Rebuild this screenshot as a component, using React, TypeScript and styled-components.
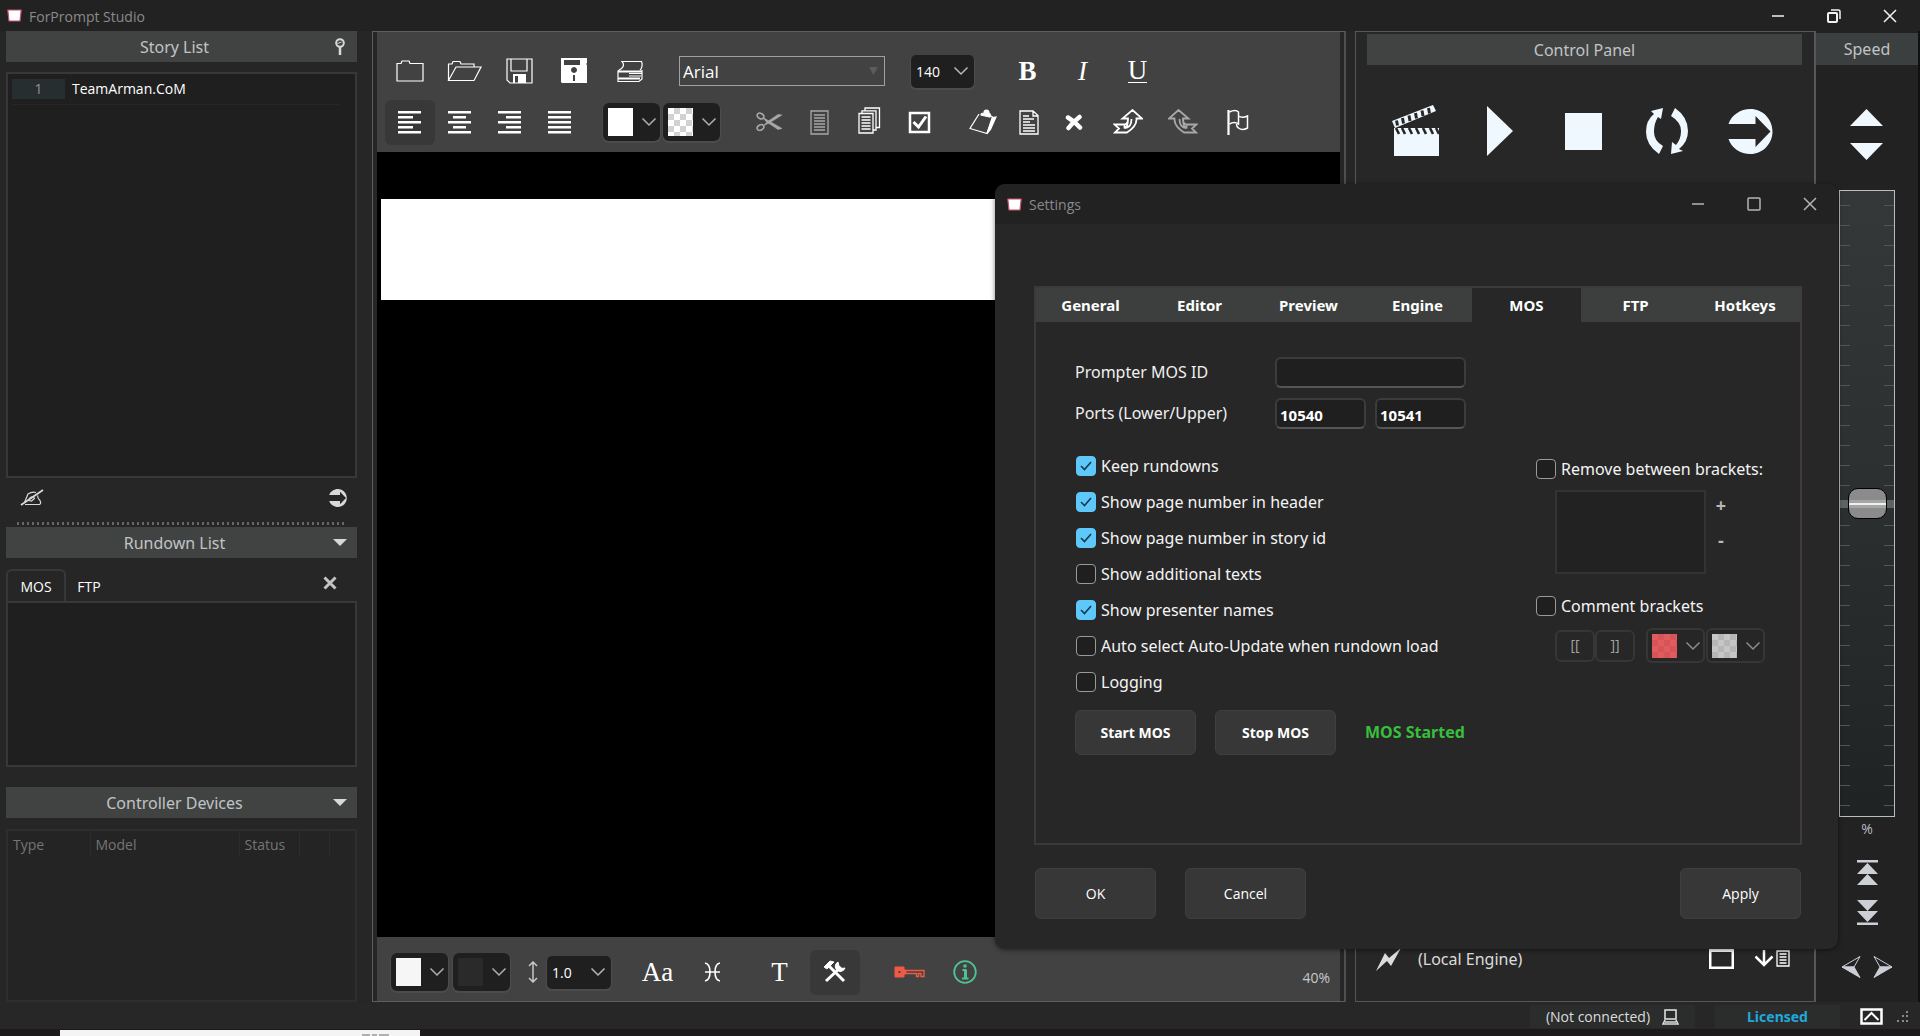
import React, { useState } from "react";
import styled, { createGlobalStyle, css } from "styled-components";

const sans = `"Open Sans", "Noto Sans", sans-serif`;
const wide = `"Noto Sans", "Open Sans", sans-serif`;
const serif = `"Liberation Serif", serif`;

const Global = createGlobalStyle`
  *, *::before, *::after { box-sizing: border-box; }
  body { margin: 0; background: #262626; font-family: ${sans}; font-size: 14px; color: #fff; overflow: hidden; }
  button, input, select { font-family: inherit; font-size: inherit; color: inherit; margin: 0; }
  button { padding: 0; border: 0; background: none; }
  svg { display: block; flex: none; }
`;

/* ---------- shell ---------- */

const Shell = styled.div`
  height: 100vh;
  display: flex;
  flex-direction: column;
  background: #262626;
`;

const TitleBar = styled.header<{ $dialog?: boolean }>`
  flex: none;
  height: ${(p) => (p.$dialog ? 40 : 31)}px;
  padding-left: ${(p) => (p.$dialog ? 12 : 7)}px;
  display: flex;
  align-items: center;
  gap: 7px;
  background: #222;
  color: #8a8a8a;
`;

const AppMark = styled.span`
  width: 15px;
  height: 13px;
`;

const TitleText = styled.h1`
  flex: 1;
  margin: 0;
  padding-top: 2px;
  font-size: 14px;
  line-height: 20px;
  font-weight: 400;
`;

const WindowButton = styled.button`
  width: 56px;
  height: 100%;
  display: grid;
  place-items: center;
`;

const WindowButtons = styled.div<{ $dim?: boolean }>`
  height: 100%;
  display: flex;
  padding-right: ${(p) => (p.$dim ? 0 : 2)}px;
  color: ${(p) => (p.$dim ? "#b5b5b5" : "#f2f2f2")};
`;

const Main = styled.main`
  flex: 1;
  min-height: 0;
  display: grid;
  grid-template-columns: 372px minmax(0, 1fr) 470px 104px;
`;

/* ---------- left column ---------- */

const Side = styled.aside`
  display: flex;
  flex-direction: column;
  padding: 0 15px 0 6px;
  min-height: 0;
`;

const PanelHeader = styled.div`
  flex: none;
  height: 31px;
  display: grid;
  grid-template-columns: 20px 1fr 34px;
  align-items: center;
  background: #414343;
  color: #c0c3c6;
`;

const PanelTitle = styled.h2`
  grid-column: 2;
  margin: 0;
  text-align: center;
  font-family: ${wide};
  font-size: 16px;
  line-height: 24px;
  font-weight: 400;
`;

const HeaderButton = styled.button`
  height: 31px;
  display: grid;
  place-items: center;
  color: #d6d8da;
`;

const StoryBox = styled.ol`
  flex: 1;
  min-height: 0;
  margin: 10px 0 0;
  padding: 4px;
  list-style: none;
  border: 2px solid #383838;
  background: #1f1f1f;
`;

const StoryRow = styled.li`
  display: flex;
  align-items: center;
  gap: 7px;
  width: 328px;
  padding-bottom: 4px;
  border-bottom: 1px solid #262626;
  font-size: 14px;
  line-height: 22px;
`;

const StoryIndex = styled.span`
  width: 53px;
  line-height: 20px;
  text-align: center;
  background: #262e30;
  color: #8f9497;
`;

const SideTools = styled.div`
  flex: none;
  height: 44px;
  padding: 0 10px 5px 14px;
  display: flex;
  align-items: center;
  justify-content: space-between;
`;

const Grip = styled.div`
  flex: none;
  height: 3px;
  margin: 0 12px 2px 11px;
  background: repeating-linear-gradient(90deg, #666 0 2px, transparent 2px 5px);
`;

const SideTabs = styled.div`
  flex: none;
  display: flex;
  margin-top: 11px;
  height: 32px;
  padding-right: 20px;
`;

const SideTab = styled.button<{ $active?: boolean }>`
  width: ${(p) => (p.$active ? 60 : 46)}px;
  border-radius: 6px 6px 0 0;
  border: 2px solid ${(p) => (p.$active ? "#383838" : "transparent")};
  border-bottom: 0;
`;

const SideClose = styled.button`
  margin-left: auto;
  height: 28px;
  color: #c4c4c4;
`;

const RundownBox = styled.div`
  flex: none;
  height: 166px;
  margin-bottom: 20px;
  border: 2px solid #383838;
  background: #1f1f1f;
`;

const DeviceBox = styled.div`
  flex: none;
  height: 173px;
  margin-top: 11px;
  border: 2px solid #2e2e2e;
  background: #242424;
`;

const DeviceTable = styled.table`
  width: 100%;
  table-layout: fixed;
  border-collapse: collapse;
  color: #757575;
  th {
    height: 26px;
    padding: 2px 0 0 5px;
    text-align: left;
    font-weight: 400;
    font-size: 14px;
    line-height: 20px;
    border-right: 1px solid #2c2c2c;
  }
  th:last-child { border-right: 0; }
`;

/* ---------- editor ---------- */

const EditorFrame = styled.section`
  display: flex;
  flex-direction: column;
  min-width: 0;
  padding: 0 4px;
  border: 1px solid #5e5e5e;
  border-right: 2px solid #4e4e4e;
`;

const Toolbar = styled.div`
  flex: none;
  display: flex;
  flex-direction: column;
  gap: 5px;
  padding: 16px 6px 7px 5px;
  background: #424242;
`;

const ToolRow = styled.div`
  height: 46px;
  display: flex;
  align-items: center;
`;

const Group = styled.div<{ $before?: number; $gap?: number }>`
  display: flex;
  align-items: center;
  margin-left: ${(p) => p.$before ?? 0}px;
  gap: ${(p) => p.$gap ?? 0}px;
`;

const Tool = styled.button<{ $w?: number; $active?: boolean; $dim?: boolean }>`
  width: ${(p) => p.$w ?? 50}px;
  height: 45px;
  display: grid;
  place-items: center;
  border-radius: 6px;
  color: ${(p) => (p.$dim ? "#a8a8a8" : "#fff")};
  ${(p) => p.$active && css`background: #383838;`}
`;

const Letter = styled.span<{ $kind?: "bold" | "italic" | "under" }>`
  font-family: ${serif};
  font-size: 27px;
  line-height: 28px;
  ${(p) => p.$kind === "bold" && css`font-weight: 700;`}
  ${(p) => p.$kind === "italic" && css`font-style: italic;`}
  ${(p) => p.$kind === "under" && css`border-bottom: 1px solid #fff; line-height: 23px;`}
`;

const SelectWrap = styled.div<{ $w: number; $flat?: boolean }>`
  width: ${(p) => p.$w}px;
  height: ${(p) => (p.$flat ? 30 : 33)}px;
  display: grid;
  align-items: center;
  ${(p) =>
    p.$flat
      ? css`border: 1px solid #a0a0a0;`
      : css`border-radius: 5px; background: #1f1f1f; box-shadow: 0 1px 0 1px #4c4c4c;`}
  > * { grid-area: 1 / 1; }
  > svg { justify-self: end; margin-right: ${(p) => (p.$flat ? 6 : 5)}px; pointer-events: none; color: #b8b8b8; }
`;

const Select = styled.select<{ $big?: boolean }>`
  appearance: none;
  width: 100%;
  height: 100%;
  padding: 0 24px 0 ${(p) => (p.$big ? 3 : 5)}px;
  border: 0;
  background: transparent;
  font-size: ${(p) => (p.$big ? 17 : 14)}px;
`;

const ColorButton = styled.button<{ $framed?: boolean }>`
  width: ${(p) => (p.$framed ? 59 : 57)}px;
  height: ${(p) => (p.$framed ? 35 : 38)}px;
  display: flex;
  align-items: center;
  justify-content: space-between;
  padding: 0 3px 0 5px;
  border-radius: 6px;
  color: #b0b0b0;
  background: #1f1f1f;
  ${(p) =>
    p.$framed
      ? css`border: 2px solid #363636; background: #262626; padding: 0 2px 0 4px; color: #8c8c8c;`
      : css`box-shadow: 0 1px 0 1px #4c4c4c;`}
`;

const Swatch = styled.span<{ $fill: string; $checker?: string; $short?: boolean }>`
  width: 25px;
  height: ${(p) => (p.$short ? 24 : 28)}px;
  background: ${(p) => p.$fill};
  ${(p) =>
    p.$checker &&
    css`
      background: conic-gradient(${p.$checker} 25%, ${p.$fill} 0 50%, ${p.$checker} 0 75%, ${p.$fill} 0) 0 0 / 12px 12px;
    `}
`;

const Page = styled.div`
  flex: 1;
  min-height: 0;
  padding: 47px 0 0 4px;
  background: #000;
`;

const CueBlock = styled.div`
  height: 101px;
  width: 84%;
  background: #fff;
`;

const EditorFooter = styled.div`
  flex: none;
  height: 64px;
  display: flex;
  padding: 13px 10px 7px 14px;
  background: #424242;
`;

const Zoom = styled.span`
  margin-left: auto;
  padding-top: 18px;
  font-size: 14px;
  line-height: 20px;
  color: #c8c8c8;
`;

/* ---------- control panel ---------- */

const Control = styled.section`
  margin-left: 9px;
  display: flex;
  flex-direction: column;
  border: 1px solid #55585a;
  border-right: 2px solid #55585a;
  background: #272727;
`;

const ControlHeader = styled(PanelHeader)`
  grid-template-columns: 36px 1fr 36px;
  margin: 2px 12px 0 11px;
`;

const Transport = styled.div`
  display: flex;
  justify-content: space-between;
  align-items: center;
  height: 100px;
  margin: 16px 34px 0 30px;
  color: #f0f8ff;
`;

const TransportButton = styled.button`
  width: 60px;
  height: 60px;
  display: grid;
  place-items: center;
`;

const EngineRow = styled.div`
  margin-top: auto;
  height: 53px;
  display: flex;
  align-items: flex-start;
  padding: 0 24px 0 20px;
  font-family: ${wide};
  font-size: 16px;
  line-height: 22px;
  color: #dcdcdc;
`;

const EngineName = styled.span`
  flex: 1;
  margin-left: 17px;
`;

const EngineTools = styled.div`
  display: flex;
  gap: 20px;
  color: #fff;
`;

/* ---------- speed ---------- */

const Speed = styled.section`
  display: flex;
  flex-direction: column;
  align-items: center;
  border-right: 2px solid #111;
  background: #222;
  color: #f0f8ff;
`;

const SpeedTitle = styled.h2`
  flex: none;
  align-self: stretch;
  margin: 2px 0 0;
  height: 32px;
  font-family: ${wide};
  font-size: 16px;
  line-height: 32px;
  font-weight: 400;
  text-align: center;
  color: #c0c3c6;
  background: #3c3f3f;
`;

const NudgeStack = styled.div`
  display: flex;
  flex-direction: column;
  gap: 17px;
  margin: 44px 2px 30px 0;
`;

const Fader = styled.input`
  appearance: none;
  writing-mode: vertical-lr;
  direction: rtl;
  flex: 1;
  min-height: 0;
  width: 56px;
  border: 1px solid #b9bdbd;
  background:
    linear-gradient(#5d6263, #5d6263) center / 100% 8px no-repeat,
    repeating-linear-gradient(180deg, transparent 0 14px, #505656 14px 15px, transparent 15px 20px) left / 10px 100% no-repeat,
    repeating-linear-gradient(180deg, transparent 0 14px, #505656 14px 15px, transparent 15px 20px) right / 10px 100% no-repeat,
    linear-gradient(#343838, #2b2f2f 50%, #1f2324);
  &::-webkit-slider-thumb {
    appearance: none;
    width: 39px;
    height: 31px;
    border: 1px solid #000;
    border-radius: 10px;
    background: linear-gradient(#8b8b8b 0 11px, #a4a6a6 11px 14px, #f0f0f0 14px 16px, #a4a6a6 16px 19px, #8b8b8b 19px);
  }
`;

const Percent = styled.span`
  margin-top: 2px;
  font-size: 14px;
  line-height: 20px;
  color: #b8bcc0;
`;

const JumpStack = styled.div`
  display: flex;
  flex-direction: column;
  gap: 15px;
  margin: 21px 0 31px;
  color: #ccd0d6;
`;

const StepPair = styled.div`
  display: flex;
  gap: 12px;
  margin-bottom: 24px;
  color: #ccd0d6;
`;

/* ---------- status ---------- */

const StatusBar = styled.footer`
  flex: none;
  height: 27px;
  display: flex;
  justify-content: flex-end;
  align-items: center;
  gap: 20px;
  padding: 2px 11px 0 0;
  font-size: 14px;
  background: #272727;
`;

const StatusCell = styled.div<{ $w: number }>`
  width: ${(p) => p.$w}px;
  height: 23px;
  display: flex;
  align-items: center;
  justify-content: center;
  gap: 12px;
  background: #2b2d2c;
  color: #dcdcdc;
`;

const License = styled.strong`
  font-family: ${wide};
  color: #1fa9dc;
`;

const StatusIcons = styled.div`
  display: flex;
  align-items: center;
  gap: 14px;
`;

const Desk = styled.div`
  flex: none;
  height: 7px;
  padding: 1px 0 0 60px;
  background: #1c1a1b;
`;

const DeskWindow = styled.div`
  width: 360px;
  height: 6px;
  padding: 4px 0 0 302px;
  background: #f4f4f4;
`;

/* ---------- settings dialog ---------- */

const Dialog = styled.section`
  position: absolute;
  left: 995px;
  top: 184px;
  width: 843px;
  border-radius: 10px;
  overflow: hidden;
  background: #272727;
  box-shadow: 0 1px 5px rgba(0, 0, 0, 0.5);
`;

const DialogBody = styled.div`
  padding: 62px 36px 30px 39px;
`;

const TabFrame = styled.div`
  border: 2px solid #3a3a3a;
  border-right-color: #423a3b;
`;

const TabList = styled.div`
  display: flex;
  height: 34px;
`;

const Tab = styled.button<{ $active: boolean }>`
  flex: 0 1 109px;
  font-family: ${wide};
  font-size: 15px;
  font-weight: 700;
  background: ${(p) => (p.$active ? "#272727" : "#3c3f3e")};
  &:last-child { flex-grow: 1; }
`;

const TabPage = styled.div`
  padding: 35px 32px 88px 39px;
`;

const Fields = styled.div`
  display: grid;
  grid-template-columns: 200px 191px;
  grid-auto-rows: 31px;
  row-gap: 10px;
  align-items: center;
`;

const FieldLabel = styled.label`
  font-family: ${wide};
  font-size: 16px;
  line-height: 22px;
  padding-bottom: 2px;
  color: #f0f0f0;
`;

const FieldRow = styled.div`
  display: flex;
  gap: 9px;
`;

const TextBox = styled.input`
  flex: 1;
  min-width: 0;
  height: 31px;
  padding: 2px 3px 0;
  border: 2px solid #3c3c3c;
  border-bottom-color: #555;
  border-radius: 6px;
  background: #1f1f1f;
  font-family: ${wide};
  font-size: 15px;
  font-weight: 700;
`;

const Options = styled.div`
  display: flex;
  justify-content: space-between;
  margin-top: 27px;
`;

const CheckList = styled.div`
  display: flex;
  flex-direction: column;
  gap: 16px;
`;

const CheckLabel = styled.label`
  display: flex;
  align-items: center;
  gap: 5px;
  height: 20px;
  padding-left: 1px;
  font-family: ${wide};
  font-size: 16px;
  line-height: 20px;
  white-space: nowrap;
  color: #f4f4f4;
`;

const CheckCell = styled.span`
  display: grid;
  place-items: center;
  > * { grid-area: 1 / 1; }
  > svg { pointer-events: none; }
`;

const CheckInput = styled.input`
  appearance: none;
  width: 20px;
  height: 20px;
  margin: 0;
  border: 1px solid #999;
  border-radius: 4px;
  background: #1f1f1f;
  &:checked { border-color: #5fc8fb; background: #5fc8fb; }
`;

const Brackets = styled.div`
  width: 233px;
  padding-top: 3px;
`;

const BracketArea = styled.div`
  display: flex;
  margin: 11px 0 22px 20px;
`;

const BracketList = styled.div`
  width: 151px;
  height: 84px;
  border: 2px solid #333;
  background: #222;
`;

const PlusMinus = styled.div`
  display: flex;
  flex-direction: column;
  margin-left: 5px;
  color: #b8b8b8;
`;

const MiniButton = styled.button`
  width: 20px;
  height: 35px;
  padding-bottom: 6px;
  font-size: 18px;
  font-weight: 700;
  line-height: 28px;
`;

const BracketButtons = styled.div`
  display: flex;
  align-items: center;
  margin: 12px 0 0 20px;
`;

const BracketKey = styled.button`
  width: 40px;
  height: 32px;
  padding-bottom: 2px;
  border: 2px solid #363636;
  border-radius: 6px;
  font-size: 14px;
  color: #a5a5a5;
`;

const Colors = styled.div`
  display: flex;
  gap: 1px;
  margin-left: 11px;
`;

const Engine = styled.div`
  display: flex;
  align-items: center;
  gap: 19px;
  margin-top: 18px;
`;

const PushButton = styled.button<{ $strong?: boolean }>`
  width: 121px;
  height: ${(p) => (p.$strong ? 45 : 51)}px;
  border: 1px solid #3f3f3f;
  border-radius: 6px;
  background: #373737;
  font-family: ${(p) => (p.$strong ? wide : sans)};
  font-size: 14px;
  font-weight: ${(p) => (p.$strong ? 700 : 400)};
`;

const Running = styled.strong`
  margin-left: 10px;
  font-family: ${wide};
  font-size: 16px;
  line-height: 22px;
  padding-bottom: 2px;
  color: #38bf3e;
`;

const DialogActions = styled.div`
  display: flex;
  gap: 29px;
  margin: 23px 1px 0;
  > :last-child { margin-left: auto; }
`;

/* ---------- drawings ---------- */

type DrawProps = { w: number; h: number; children: React.ReactNode; sw?: number };
const Line = ({ w, h, children, sw = 1.5 }: DrawProps) => (
  <svg width={w} height={h} viewBox={`0 0 ${w} ${h}`} fill="none" stroke="currentColor" strokeWidth={sw} aria-hidden="true">
    {children}
  </svg>
);
const Solid = ({ w, h, children }: DrawProps) => (
  <svg width={w} height={h} viewBox={`0 0 ${w} ${h}`} fill="currentColor" aria-hidden="true">
    {children}
  </svg>
);

const Mark = () => (
  <AppMark>
    <svg width="15" height="13" viewBox="0 0 15 13" aria-hidden="true">
      <path d="M.8 1h13.400l-1.200 11H2z" fill="#fff" stroke="#c9506a" strokeWidth="1.200" strokeLinejoin="round" />
    </svg>
  </AppMark>
);
const Chevron = () => (
  <Line w={16} h={10}><path d="M1.500 1.500 8 8l6.500-6.500" /></Line>
);
const Minimise = () => <Line w={14} h={14}><path d="M1 7h12" /></Line>;
const Close = () => <Line w={14} h={14}><path d="M1 1l12 12M13 1L1 13" /></Line>;
const Restore = () => (
  <Line w={14} h={14}><rect x="1" y="4" width="9" height="9" rx="1" strokeWidth="2" /><path d="M4 1h7.500q1.500 0 1.500 1.500V10" /></Line>
);
const Maximise = () => <Line w={14} h={14}><rect x="1" y="1" width="12" height="12" rx="1" /></Line>;
const Triangle = () => <Solid w={14} h={7}><path d="M0 0h14L7 7z" /></Solid>;
const Pin = () => (
  <Line w={12} h={18} sw={2}><circle cx="6" cy="5" r="3.800" /><path d="M6 9v8" strokeWidth="2.500" /><path d="M3.500 5.500l4-1.500" strokeWidth="1" /></Line>
);
const WriteOff = () => (
  <Line w={24} h={17} sw={1.2}>
    <path d="M1 16L23 1" strokeWidth="1.800" />
    <path d="M4.500 13.500L8 5q4-2.500 8-1.500M18 6.500q-1 2 2 5 1.500 3-.5 4H5M9 11.500q0-3.500 4-4l1.500 2-3 2.500z" />
  </Line>
);
const GoCircle = ({ s = 18 }: { s?: number }) => (
  <svg width={s} height={s} viewBox="0 0 44 45" fill="currentColor" aria-hidden="true">
    <path d="M0 15C3 6 12 0 22 0c12 0 22 10 22 22.500S34 45 22 45C12 45 3 39 0 30h27v8l15-15.500L27 7v8z" />
  </svg>
);
const CloseBold = () => <Line w={14} h={14} sw={3}><path d="M1.500 1.500l11 11M12.500 1.500l-11 11" /></Line>;

const Folder = () => <Line w={28} h={22} sw={1.2}><path d="M1 3.500h4l1-2.500h7l1 2.500h13V21H1z" /></Line>;
const FolderOpen = () => (
  <Line w={35} h={22} sw={1.2}><path d="M1.500 20.500V4H5l1-2.500h7L14 4h13v3M1.500 20.500L9 7h25l-7 13.500z" /></Line>
);
const Save = () => (
  <Line w={27} h={26} sw={1.2}>
    <path d="M1 1h25v24H4l-3-3zM5 1v12h16V1" />
    <path d="M8 25v-8h11v8" strokeWidth="2" />
    <path d="M12 17.500h6V25h-6z" fill="currentColor" stroke="none" />
  </Line>
);
const SaveAs = () => (
  <Solid w={27} h={26}>
    <path fillRule="evenodd" d="M0 0h26v5l-1 1 1 1v18H1l-1-1zM3 2v5h16V2zM13 9a3 3 0 1 0 .01 0zM12 17v6h2v-6z" />
  </Solid>
);
const Print = () => (
  <Line w={26} h={23} sw={1.2}>
    <path d="M5 8q3-3 0-6.500h19.500Q26 5 24 9l-1 1M5 8L1 11v10.500h21l3-2.500v-9" />
    <path d="M1 11.500h24M1 18.500h22" strokeWidth="1.800" /><path d="M12 13.500h13M12 16h12" />
  </Line>
);
const Align = ({ rows }: { rows: [number, number][] }) => (
  <Solid w={24} h={24}>
    {rows.map(([x, w], i) => <rect key={i} x={x} y={i * 5 + 1} width={w} height="2.500" />)}
  </Solid>
);
const alignments: { label: string; rows: [number, number][] }[] = [
  { label: "Align left", rows: [[0, 23], [0, 15], [0, 23], [0, 15], [0, 23]] },
  { label: "Center", rows: [[0, 23], [5, 13], [0, 23], [5, 13], [0, 23]] },
  { label: "Align right", rows: [[0, 23], [8, 15], [0, 23], [8, 15], [0, 23]] },
  { label: "Justify", rows: [[0, 23], [0, 23], [0, 23], [0, 23], [0, 23]] },
];
const Scissors = () => (
  <Line w={27} h={20} sw={1.6}>
    <ellipse cx="4.500" cy="4" rx="3.500" ry="2.600" transform="rotate(30 4.500 4)" />
    <ellipse cx="4.500" cy="15.500" rx="3.500" ry="2.600" transform="rotate(-30 4.500 15.500)" />
    <path d="M7 5.500L26 16.500l-4 1L10 9.500zM7 14l4-4L22 2.500l4 .5L14 10.500z" fill="currentColor" strokeWidth=".6" />
  </Line>
);
const ListDoc = ({ w = 19, h = 25 }: { w?: number; h?: number }) => (
  <svg width={w} height={h} viewBox="0 0 19 25" fill="none" stroke="currentColor" strokeWidth="1.300" aria-hidden="true">
    <path d="M1 1h17v23H1zM4 5h11M4 8h11M4 11h11M4 14h11M4 17h11M4 20h11" />
  </svg>
);
const Pages = () => (
  <Line w={23} h={31} sw={1.3}>
    <path d="M1 6.500h14V26H1zM3.500 10h9M3.500 13h9M3.500 16h9M3.500 19h9M3.500 22h9M4 6V3.800h14V23h-3M7 3.500V1h14.500v19.500H18" />
  </Line>
);
const CheckBoxed = () => (
  <Line w={23} h={23} sw={2.5}><path d="M2 2h19v19H2z" /><path d="M5.500 11l5 5L18 5.500" strokeWidth="3" /></Line>
);
const Clipboard = () => (
  <Line w={28} h={26} sw={1.2}>
    <path d="M10 5L1 19.500l17 5L23.500 8l-3-2" />
    <path d="M23.500 8.500L27 8l-5.500 12.500L18 24.500z" fill="currentColor" />
    <path d="M12 6q0-2 3-2 0-3 2.500-3T20 4q2 1 1 4z" fill="currentColor" />
  </Line>
);
const Doc = () => (
  <Line w={20} h={25} sw={1.3}><path d="M1 1h13l5 4.500V24H1zM14 1v5h5M4 6h6M4 9h11M4 12h7M4 15h12M4 18h12M4 21h12" /></Line>
);
const Cross = () => (
  <Line w={18} h={17} sw={4.5}><path d="M3 3.500Q9 7 15 13.500M14.500 3Q8 8 3.500 14" strokeLinecap="round" /></Line>
);
const Ribbon = ({ flip }: { flip?: boolean }) => (
  <Line w={30} h={26} sw={1.8}>
    <g transform={flip ? "translate(30 0) scale(-1 1)" : undefined}>
      <path d="M1.500 15.500h10q3.500-.5 3.500-6h-5.500L19.500 1 29 9.500h-5.500Q24 17 14 23.500H2l4-4zM15 10q0 8-3.500 8.500v-3M18.500 10q0 9-7 9" />
    </g>
  </Line>
);
const Flag = () => (
  <Line w={22} h={26} sw={1.5}>
    <path d="M1.500 1v25" strokeWidth="2.200" />
    <path d="M2.500 3q6-3 9 0v12q-4-3-9 0M11.500 7q3.500 2.500 9 0v12q-5 3-9 0-2-1-2-4" />
  </Line>
);
const Pisces = () => (
  <Line w={17} h={20} sw={1.6}><path d="M1 1q5 1 5 9t-5 9M16 1q-5 1-5 9t5 9M1 10h15" /></Line>
);
const HeightArrow = () => (
  <svg width="10" height="22" viewBox="0 0 10 22" fill="none" stroke="#c8c8c8" strokeWidth="1.500" aria-hidden="true">
    <path d="M5 1v20M1 5l4-4 4 4M1 17l4 4 4-4" />
  </svg>
);
const HammerWrench = () => (
  <Line w={24} h={24} sw={3}>
    <path d="M6 6l15 15M18 7L3 21" />
    <path d="M1 7l6-6 4 1-7 7zM15 2a5 5 0 1 0 7 6l-4 .5L16 6z" fill="currentColor" strokeWidth="1" />
  </Line>
);
const Key = () => (
  <svg width="31" height="14" viewBox="0 0 31 14" fill="none" stroke="#ee5a45" strokeWidth="1.400" aria-hidden="true">
    <path fillRule="evenodd" d="M1 2h9v3h2v4h-2v3H1zM4 5.500v3h3v-3z" fill="#ee5a45" strokeWidth="1" />
    <path d="M12 5.500h18v6h-3V8.500h-2.500v3h-2v-3H12" />
  </svg>
);
const Info = () => (
  <svg width="24" height="24" viewBox="0 0 24 24" fill="none" stroke="#4fc295" strokeWidth="1.800" aria-hidden="true">
    <circle cx="12" cy="12" r="10.800" />
    <path d="M12.500 10v8" strokeWidth="3" /><path d="M9.500 10h4M9 18.500h6.500" /><circle cx="12" cy="6" r="1.800" fill="#4fc295" stroke="none" />
  </svg>
);

const Clapper = () => (
  <Solid w={48} h={52}>
    <path d="M2 23h45v28H2z" />
    <g stroke="#272727" strokeWidth="2.600">
      <path d="M4 23l3 6M10 23l3 6M17 23l3 6M24 23l3 6M31 23l3 6M38 23l3 6M44 23l3 6" />
    </g>
    <path d="M0 16L41 0l3 6L3 23z" />
    <g stroke="#272727" strokeWidth="3">
      <path d="M4.500 15.500l1 5M10.500 13l1 5.500M17 10.500l1 5.500M23.500 8l1 5.500M30 5.500l1 5.500M36.500 3l1 5.500" />
    </g>
  </Solid>
);
const Play = () => <Solid w={26} h={50}><path d="M0 0l26 25L0 50z" /></Solid>;
const Stop = () => <Solid w={37} h={37}><path d="M0 0h37v37H0z" /></Solid>;
const Cycle = () => (
  <Solid w={42} h={46}>
    <path d="M13 46Q0 37 0 24 0 12 8 6L5 3 17 0l-2 11-3-2Q8 15 8 24t9 14z" />
    <path d="M29 0q13 9 13 23 0 11-9 18l4 2-12 3 1-12 4 3q5-6 5-14 0-9-10-15z" />
  </Solid>
);
const Up = () => <Solid w={33} h={17}><path d="M0 17L16.500 0 33 17z" /></Solid>;
const Down = () => <Solid w={33} h={17}><path d="M0 0h33L16.500 17z" /></Solid>;
const ToTop = () => <Solid w={21} h={25}><path d="M0 0h21v2.500H0zM0 14L10.500 3 21 14zM0 25l10.500-11L21 25z" /></Solid>;
const ToEnd = () => <Solid w={21} h={25}><path d="M0 22.500h21V25H0zM0 0h21L10.500 11zM0 11h21L10.500 22z" /></Solid>;
const StepLeft = () => (
  <Line w={20} h={22} sw={1}><path d="M19 .5L1 11h12z" /><path d="M1 11h12l6 10.500z" fill="currentColor" /></Line>
);
const StepRight = () => (
  <Line w={20} h={22} sw={1}><path d="M1 .5L19 11H7z" /><path d="M19 11H7L1 21.500z" fill="currentColor" /></Line>
);
const Bolt = () => <Solid w={25} h={23}><path d="M25 0L15 18l-4-5L0 23 9 5l4 5z" /></Solid>;
const WindowIcon = () => <Solid w={25} h={21}><path fillRule="evenodd" d="M0 0h25v21H0zM2.500 4v14.500h20V4z" /></Solid>;
const ArrowList = () => (
  <Line w={36} h={17}>
    <path d="M10 0v15M1.500 6.500L10 15l8.500-8.500" strokeWidth="2.500" />
    <path d="M23 1h12v15H23zM25.500 4h7M25.500 7h7M25.500 10h7M25.500 13h7" strokeWidth="1.300" />
  </Line>
);
const Laptop = () => (
  <Line w={17} h={16} sw={1.6}><rect x="3" y="1" width="11" height="9" /><path d="M3 11l-2 4h15l-2-4M3 13h11" /></Line>
);
const ExpandBox = () => <Line w={23} h={17} sw={2.5}><path d="M1.500 1.500h20v14h-20z" /><path d="M4.500 12l7-7 7 7" strokeWidth="2" /></Line>;
const SizeGrip = () => (
  <svg width="12" height="12" viewBox="0 0 12 12" fill="#8a8a8a" aria-hidden="true">
    <path d="M9 0h2v2H9zM5 4h2v2H5zM9 4h2v2H9zM0 9h2v2H0zM5 9h2v2H5zM9 9h2v2H9z" />
  </svg>
);
const Tick = () => (
  <svg width="12" height="10" viewBox="0 0 12 10" fill="none" stroke="#12394c" strokeWidth="1.600" aria-hidden="true">
    <path d="M1 5l3.500 3.500L11 1" />
  </svg>
);

/* ---------- pieces ---------- */

const Dropdown = ({ label, value, w, options }: { label: string; value: string; w: number; options: string[] }) => (
  <SelectWrap $w={w}>
    <Select aria-label={label} defaultValue={value}>
      {options.map((o) => <option key={o}>{o}</option>)}
    </Select>
    <Chevron />
  </SelectWrap>
);

const Check = ({ label, on }: { label: string; on?: boolean }) => {
  const [checked, setChecked] = useState(!!on);
  return (
    <CheckLabel>
      <CheckCell>
        <CheckInput type="checkbox" checked={checked} onChange={(e) => setChecked(e.target.checked)} />
        {checked && <Tick />}
      </CheckCell>
      {label}
    </CheckLabel>
  );
};

const fileTools = [
  { label: "New", icon: <Folder /> },
  { label: "Open", icon: <FolderOpen /> },
  { label: "Save", icon: <Save /> },
  { label: "Save as", icon: <SaveAs /> },
  { label: "Print", icon: <Print /> },
];

const LeftColumn = () => (
  <Side>
    <PanelHeader>
      <PanelTitle>Story List</PanelTitle>
      <HeaderButton aria-label="Pin"><Pin /></HeaderButton>
    </PanelHeader>
    <StoryBox>
      <StoryRow><StoryIndex>1</StoryIndex>TeamArman.CoM</StoryRow>
    </StoryBox>
    <SideTools>
      <HeaderButton aria-label="Edit off"><WriteOff /></HeaderButton>
      <HeaderButton aria-label="Go to story"><GoCircle /></HeaderButton>
    </SideTools>
    <Grip />
    <PanelHeader>
      <PanelTitle>Rundown List</PanelTitle>
      <HeaderButton aria-label="Rundown menu"><Triangle /></HeaderButton>
    </PanelHeader>
    <SideTabs role="tablist">
      <SideTab role="tab" aria-selected $active>MOS</SideTab>
      <SideTab role="tab" aria-selected={false}>FTP</SideTab>
      <SideClose aria-label="Close rundown"><CloseBold /></SideClose>
    </SideTabs>
    <RundownBox />
    <PanelHeader>
      <PanelTitle>Controller Devices</PanelTitle>
      <HeaderButton aria-label="Devices menu"><Triangle /></HeaderButton>
    </PanelHeader>
    <DeviceBox>
      <DeviceTable>
        <colgroup>
          <col width="82" /><col width="149" /><col width="60" /><col width="30" /><col />
        </colgroup>
        <thead>
          <tr><th>Type</th><th>Model</th><th>Status</th><th /><th /></tr>
        </thead>
      </DeviceTable>
    </DeviceBox>
  </Side>
);

const Editor = () => (
  <EditorFrame>
    <Toolbar>
      <ToolRow>
        <Group>
          {fileTools.map((t) => <Tool key={t.label} $w={55} aria-label={t.label}>{t.icon}</Tool>)}
        </Group>
        <Group $before={22}>
          <SelectWrap $w={206} $flat>
            <Select aria-label="Font" $big><option>Arial</option></Select>
            <svg width="9" height="8" viewBox="0 0 9 8" fill="#5c5c5c" aria-hidden="true"><path d="M0 0h9L4.500 8z" /></svg>
          </SelectWrap>
        </Group>
        <Group $before={26}>
          <Dropdown label="Font size" value="140" w={63} options={["120", "140", "160"]} />
        </Group>
        <Group $before={26}>
          <Tool $w={55} aria-label="Bold"><Letter $kind="bold">B</Letter></Tool>
          <Tool $w={55} aria-label="Italic"><Letter $kind="italic">I</Letter></Tool>
          <Tool $w={55} aria-label="Underline"><Letter $kind="under">U</Letter></Tool>
        </Group>
      </ToolRow>
      <ToolRow>
        <Group $before={3}>
          {alignments.map((a, i) => <Tool key={a.label} $active={i === 0} aria-label={a.label}><Align rows={a.rows} /></Tool>)}
        </Group>
        <Group $before={18} $gap={3}>
          <ColorButton aria-label="Text colour"><Swatch $fill="#fff" /><Chevron /></ColorButton>
          <ColorButton aria-label="Highlight colour"><Swatch $fill="#fff" $checker="#d2d2d2" /><Chevron /></ColorButton>
        </Group>
        <Group $before={24}>
          <Tool $dim aria-label="Cut"><Scissors /></Tool>
          <Tool $dim aria-label="Copy"><ListDoc /></Tool>
          <Tool aria-label="Copy all"><Pages /></Tool>
          <Tool aria-label="Select all"><CheckBoxed /></Tool>
        </Group>
        <Group $before={16}>
          <Tool $w={46} aria-label="Paste"><Clipboard /></Tool>
          <Tool $w={45} aria-label="Paste text"><Doc /></Tool>
          <Tool $w={45} aria-label="Delete"><Cross /></Tool>
        </Group>
        <Group $before={4}>
          <Tool $w={55} aria-label="Undo"><Ribbon /></Tool>
          <Tool $w={55} $dim aria-label="Redo"><Ribbon flip /></Tool>
          <Tool $w={55} aria-label="Marker"><Flag /></Tool>
        </Group>
      </ToolRow>
    </Toolbar>
    <Page><CueBlock /></Page>
    <EditorFooter>
      <Group $gap={5}>
        <ColorButton aria-label="Page text colour"><Swatch $fill="#f6f6f6" /><Chevron /></ColorButton>
        <ColorButton aria-label="Page background"><Swatch $fill="#2a2a2a" /><Chevron /></ColorButton>
      </Group>
      <Group $before={18} $gap={9}>
        <HeightArrow />
        <Dropdown label="Line spacing" value="1.0" w={64} options={["1.0", "1.5", "2.0"]} />
      </Group>
      <Group $before={19}>
        <Tool $w={55} aria-label="Letter case"><Letter>Aa</Letter></Tool>
        <Tool $w={55} aria-label="Mirror"><Pisces /></Tool>
      </Group>
      <Group $before={12} $gap={3}>
        <Tool $w={55} aria-label="Text"><Letter>T</Letter></Tool>
        <Tool $active aria-label="Settings"><HammerWrench /></Tool>
      </Group>
      <Group $before={22}>
        <Tool $w={55} aria-label="License"><Key /></Tool>
        <Tool $w={55} aria-label="About"><Info /></Tool>
      </Group>
      <Zoom>40%</Zoom>
    </EditorFooter>
  </EditorFrame>
);

const ControlPanel = () => (
  <Control>
    <ControlHeader><PanelTitle>Control Panel</PanelTitle></ControlHeader>
    <Transport>
      <TransportButton aria-label="Take"><Clapper /></TransportButton>
      <TransportButton aria-label="Play"><Play /></TransportButton>
      <TransportButton aria-label="Stop"><Stop /></TransportButton>
      <TransportButton aria-label="Reload"><Cycle /></TransportButton>
      <TransportButton aria-label="Next"><GoCircle s={45} /></TransportButton>
    </Transport>
    <EngineRow>
      <Bolt />
      <EngineName>(Local Engine)</EngineName>
      <EngineTools>
        <button aria-label="Output window"><WindowIcon /></button>
        <button aria-label="Load list"><ArrowList /></button>
      </EngineTools>
    </EngineRow>
  </Control>
);

const SpeedColumn = () => (
  <Speed>
    <SpeedTitle>Speed</SpeedTitle>
    <NudgeStack>
      <button aria-label="Faster"><Up /></button>
      <button aria-label="Slower"><Down /></button>
    </NudgeStack>
    <Fader type="range" aria-label="Speed" min={-100} max={100} defaultValue={0} />
    <Percent>%</Percent>
    <JumpStack>
      <button aria-label="To start"><ToTop /></button>
      <button aria-label="To end"><ToEnd /></button>
    </JumpStack>
    <StepPair>
      <button aria-label="Previous"><StepLeft /></button>
      <button aria-label="Next page"><StepRight /></button>
    </StepPair>
  </Speed>
);

const tabs = ["General", "Editor", "Preview", "Engine", "MOS", "FTP", "Hotkeys"];

const Settings = () => (
  <Dialog role="dialog" aria-label="Settings">
    <TitleBar $dialog>
      <Mark />
      <TitleText as="h2">Settings</TitleText>
      <WindowButtons $dim>
        <WindowButton aria-label="Minimise"><Minimise /></WindowButton>
        <WindowButton aria-label="Maximise"><Maximise /></WindowButton>
        <WindowButton aria-label="Close"><Close /></WindowButton>
      </WindowButtons>
    </TitleBar>
    <DialogBody>
      <TabFrame>
        <TabList role="tablist">
          {tabs.map((t) => <Tab key={t} role="tab" aria-selected={t === "MOS"} $active={t === "MOS"}>{t}</Tab>)}
        </TabList>
        <TabPage>
          <Fields>
            <FieldLabel htmlFor="mos-id">Prompter MOS ID</FieldLabel>
            <FieldRow><TextBox id="mos-id" /></FieldRow>
            <FieldLabel htmlFor="port-low">Ports (Lower/Upper)</FieldLabel>
            <FieldRow>
              <TextBox id="port-low" defaultValue="10540" />
              <TextBox aria-label="Upper port" defaultValue="10541" />
            </FieldRow>
          </Fields>
          <Options>
            <CheckList>
              <Check label="Keep rundowns" on />
              <Check label="Show page number in header" on />
              <Check label="Show page number in story id" on />
              <Check label="Show additional texts" />
              <Check label="Show presenter names" on />
              <Check label="Auto select Auto-Update when rundown load" />
              <Check label="Logging" />
            </CheckList>
            <Brackets>
              <Check label="Remove between brackets:" />
              <BracketArea>
                <BracketList />
                <PlusMinus>
                  <MiniButton>+</MiniButton>
                  <MiniButton>-</MiniButton>
                </PlusMinus>
              </BracketArea>
              <Check label="Comment brackets" />
              <BracketButtons>
                <BracketKey>[[</BracketKey>
                <BracketKey>]]</BracketKey>
                <Colors>
                  <ColorButton $framed aria-label="Comment colour"><Swatch $short $fill="#e25b5e" $checker="#d45458" /><Chevron /></ColorButton>
                  <ColorButton $framed aria-label="Comment background"><Swatch $short $fill="#c6c6c6" $checker="#b6b6b6" /><Chevron /></ColorButton>
                </Colors>
              </BracketButtons>
            </Brackets>
          </Options>
          <Engine>
            <PushButton $strong>Start MOS</PushButton>
            <PushButton $strong>Stop MOS</PushButton>
            <Running>MOS Started</Running>
          </Engine>
        </TabPage>
      </TabFrame>
      <DialogActions>
        <PushButton>OK</PushButton>
        <PushButton>Cancel</PushButton>
        <PushButton>Apply</PushButton>
      </DialogActions>
    </DialogBody>
  </Dialog>
);

export default function App() {
  return (
    <Shell>
      <Global />
      <TitleBar>
        <Mark />
        <TitleText>ForPrompt Studio</TitleText>
        <WindowButtons>
          <WindowButton aria-label="Minimise"><Minimise /></WindowButton>
          <WindowButton aria-label="Restore"><Restore /></WindowButton>
          <WindowButton aria-label="Close"><Close /></WindowButton>
        </WindowButtons>
      </TitleBar>
      <Main>
        <LeftColumn />
        <Editor />
        <ControlPanel />
        <SpeedColumn />
      </Main>
      <StatusBar>
        <StatusCell $w={165}>(Not connected)<Laptop /></StatusCell>
        <StatusCell $w={125}><License>Licensed</License></StatusCell>
        <StatusIcons>
          <ExpandBox />
          <SizeGrip />
        </StatusIcons>
      </StatusBar>
      <Desk>
        <DeskWindow>
          <svg width="28" height="2" viewBox="0 0 28 2" stroke="#999" aria-hidden="true"><path d="M0 1h8M10 1h5M17 1h10" strokeWidth="1.500" /></svg>
        </DeskWindow>
      </Desk>
      <Settings />
    </Shell>
  );
}
